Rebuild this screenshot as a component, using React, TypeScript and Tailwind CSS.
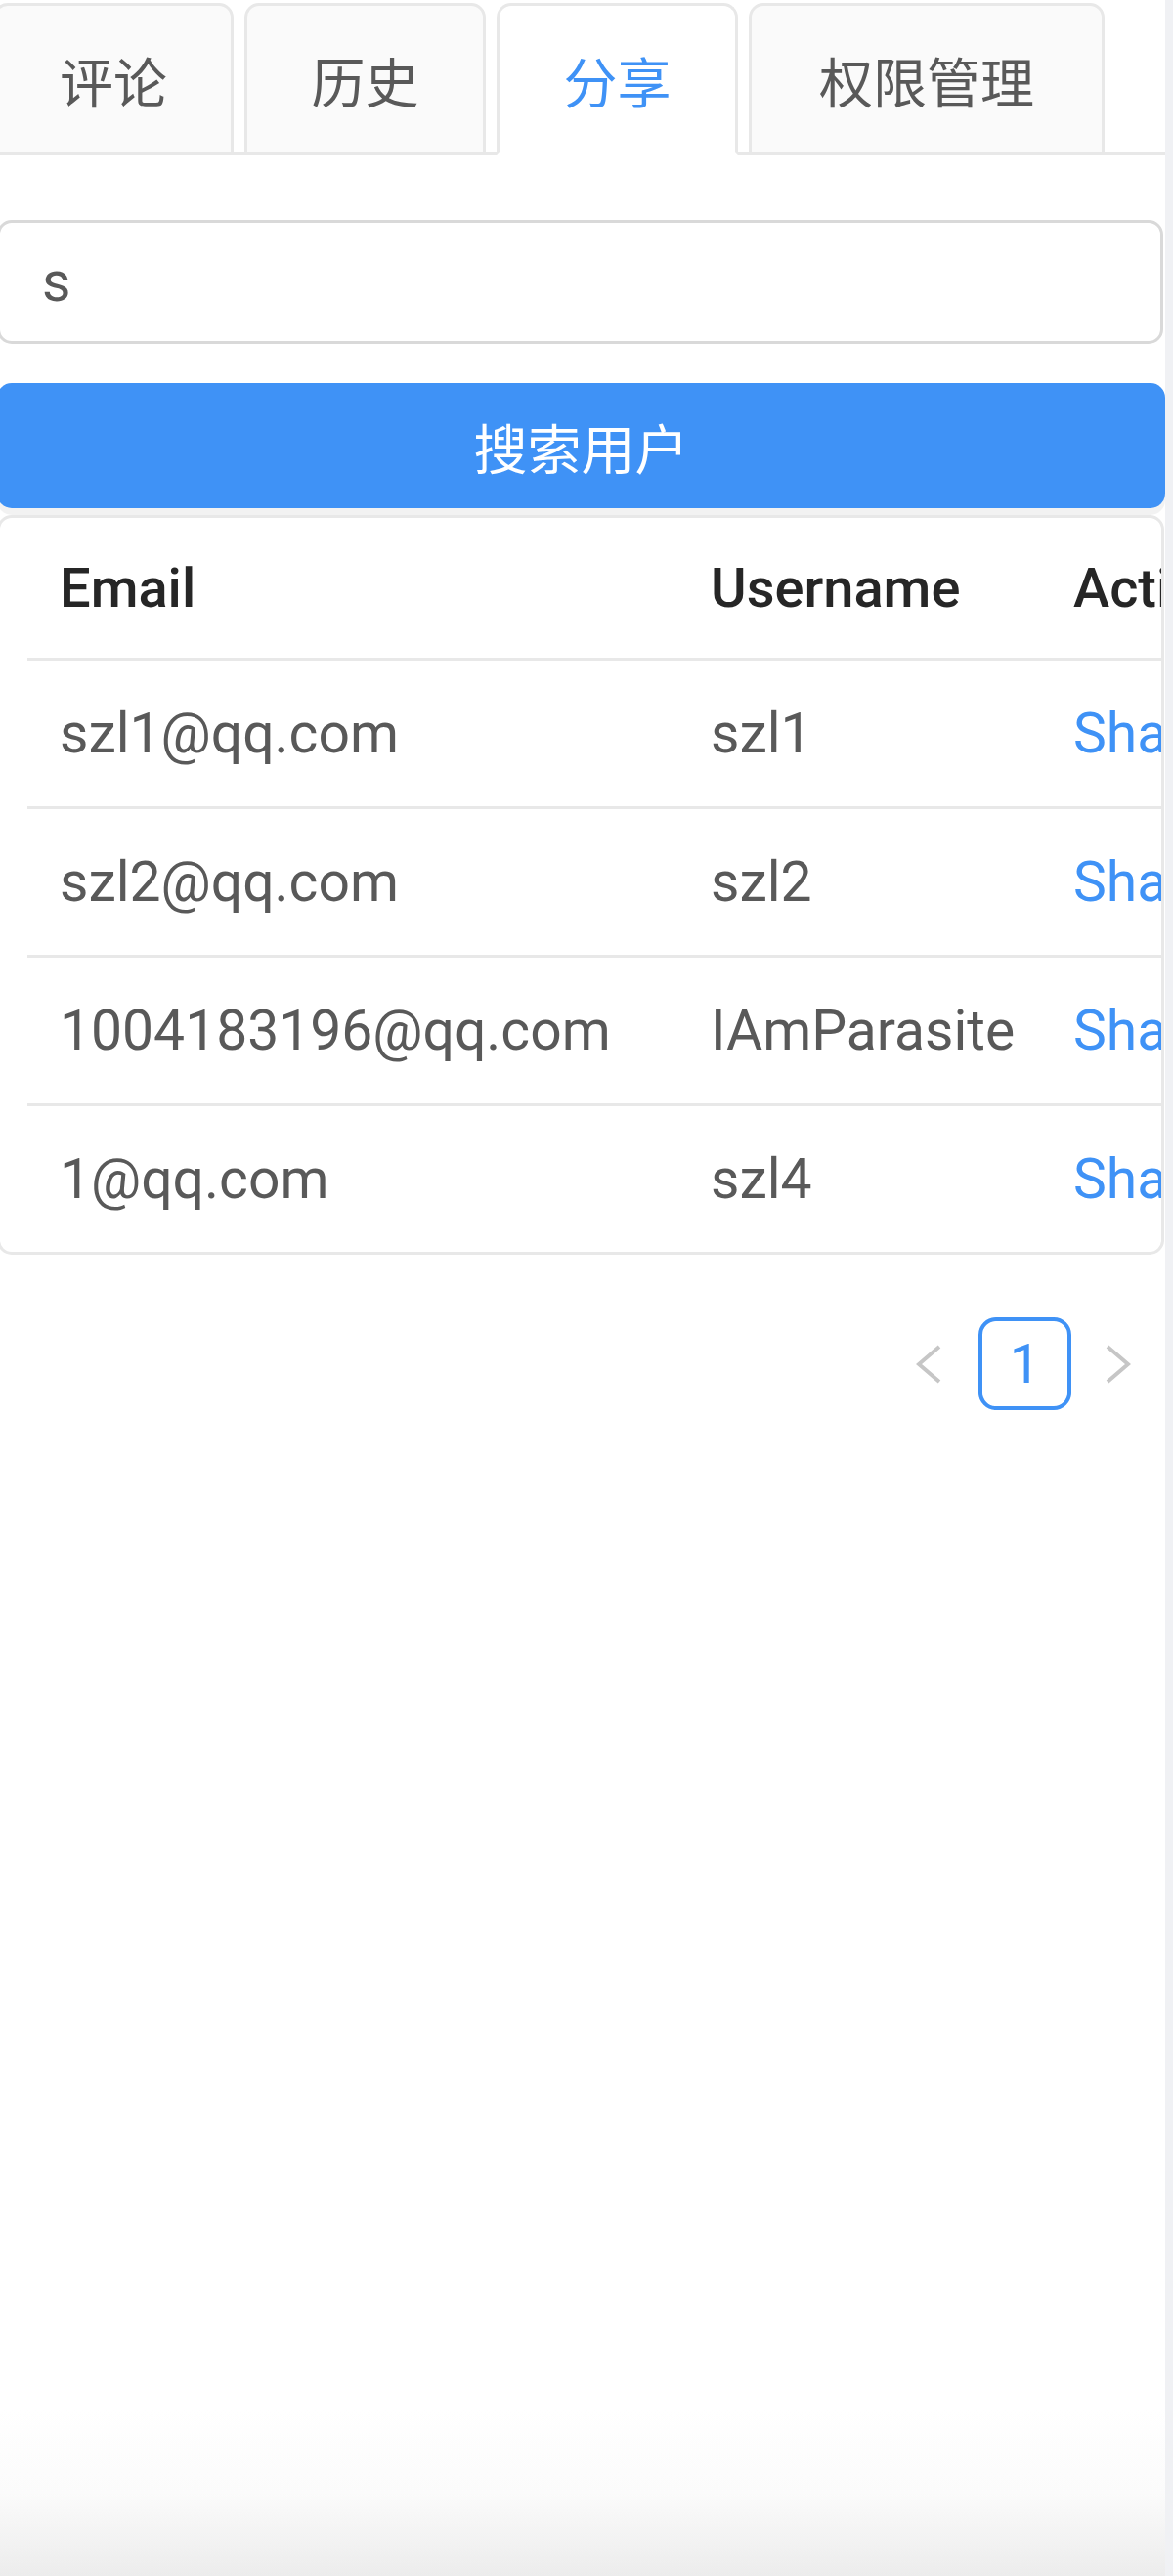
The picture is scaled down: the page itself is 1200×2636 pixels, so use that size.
const tabs = [
  { label: "评论", width: "w-[246px]", first: true },
  { label: "历史", width: "w-[247px]" },
  { label: "分享", width: "w-[247px]", active: true },
  { label: "权限管理", width: "w-[364px]" },
];

const users = [
  { email: "szl1@qq.com", username: "szl1" },
  { email: "szl2@qq.com", username: "szl2" },
  { email: "1004183196@qq.com", username: "IAmParasite" },
  { email: "1@qq.com", username: "szl4" },
];

function Chevron({ dir }: { dir: "left" | "right" }) {
  const points = dir === "left" ? "24,2 3,20 24,38" : "2,2 23,20 2,38";
  return (
    <svg width="26" height="40" viewBox="0 0 26 40" fill="none">
      <polyline points={points} stroke="#c6c6c6" strokeWidth="4" strokeLinejoin="miter" />
    </svg>
  );
}

export default function App() {
  return (
    <div className="flex h-[2636px] w-[1200px] bg-white font-['Roboto','Noto_Sans_CJK_SC',sans-serif]">
      <div className="flex w-[1192px] flex-col overflow-hidden">
        {/* tabs */}
        <div className="flex h-[159px] items-end gap-[11px] border-b-[3px] border-[#e8e8e8]">
          {tabs.map((tab) => (
            <div
              key={tab.label}
              className={`-mb-[3px] flex h-[156px] shrink-0 items-center justify-center rounded-t-[15px] border-[3px] border-[#e8e8e8] text-[55px] leading-none font-['Noto_Sans_CJK_SC',sans-serif] ${tab.width} ${
                tab.first ? "-ml-[7px]" : ""
              } ${tab.active ? "border-b-white bg-white text-[#3f92f6]" : "bg-[#fafafa] text-[#595959]"}`}
            >
              {tab.label}
            </div>
          ))}
        </div>

        {/* search */}
        <input
          readOnly
          value="s"
          className="mt-[66px] -ml-[3px] h-[127px] w-[1193px] shrink-0 rounded-[15px] border-[3px] border-[#d9d9d9] bg-white pl-[43px] text-[57px] text-[#595959] outline-none"
        />
        <button className="mt-[40px] -ml-[3px] flex h-[128px] w-[1195px] shrink-0 items-center justify-center rounded-[15px] bg-[#3f92f6] text-[55px] leading-none text-white shadow-[0_7px_0_rgba(0,0,0,0.05)] font-['Noto_Sans_CJK_SC',sans-serif]">
          搜索用户
        </button>

        {/* results */}
        <div className="mt-[7px] -ml-[3px] w-[1194px] shrink-0 overflow-hidden rounded-[15px] border-[3px] border-[#e8e8e8] pl-[28px]">
          <div className="grid h-[146px] w-[1400px] grid-cols-[666px_371px_363px] items-center border-b-[3px] border-[#e8e8e8] text-[56px] leading-none font-medium text-[#262626]">
            <div className="px-[33px]">Email</div>
            <div className="px-[33px]">Username</div>
            <div className="px-[33px]">Action</div>
          </div>
          {users.map((u, i) => (
            <div
              key={u.email}
              className={`grid w-[1400px] grid-cols-[666px_371px_363px] items-center text-[57px] leading-none text-[#595959] ${
                i < users.length - 1 ? "h-[152px] border-b-[3px] border-[#e8e8e8]" : "h-[149px]"
              }`}
            >
              <div className="whitespace-nowrap px-[33px]">{u.email}</div>
              <div className="whitespace-nowrap px-[33px]">{u.username}</div>
              <div className="whitespace-nowrap px-[33px] text-[#3f92f6]">Share</div>
            </div>
          ))}
        </div>

        {/* pagination */}
        <div className="mt-[64px] flex shrink-0 items-center justify-end">
          <div className="flex h-[95px] w-[96px] items-center justify-center">
            <Chevron dir="left" />
          </div>
          <div className="ml-[3px] flex h-[95px] w-[95px] items-center justify-center rounded-[18px] border-[4px] border-[#3f92f6] text-[56px] leading-none text-[#3f92f6]">
            1
          </div>
          <div className="flex h-[95px] w-[96px] items-center justify-center">
            <Chevron dir="right" />
          </div>
        </div>

        <div className="flex-1" />
        <div className="h-[170px] shrink-0 bg-[linear-gradient(to_bottom,#ffffff,#fbfbfb_50%,#ececec)]" />
      </div>
      <div className="w-[8px] bg-[#f0f1f4]" />
    </div>
  );
}
